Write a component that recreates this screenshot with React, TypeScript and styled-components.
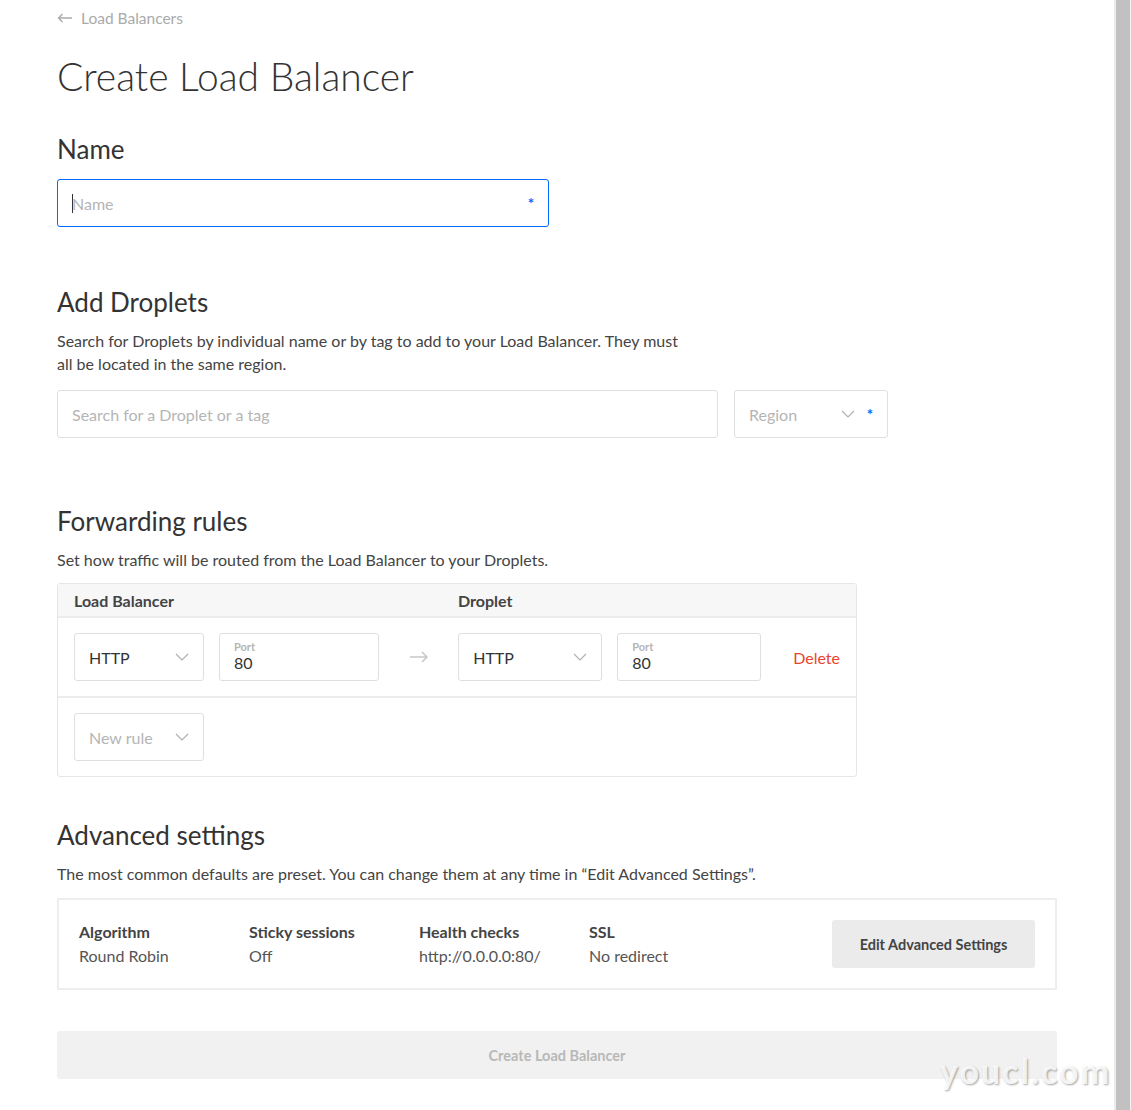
import styled, { createGlobalStyle } from 'styled-components';

const GlobalStyle = createGlobalStyle`
    body {
        margin: 0;
        background: #fff;
        font-family: Lato, "Liberation Sans", sans-serif;
        color: #444;
    }
`;

const Page = styled.div`
    position: relative;
    width: 1000px;
    padding: 8px 0 40px 57px;
`;

const BackLink = styled.a`
    display: flex;
    align-items: center;
    gap: 8px;
    height: 20px;
    font-size: 15.5px;
    color: #aaa;
    text-decoration: none;
`;

const Title = styled.h1`
    margin: 24px 0 0;
    font-size: 39px;
    line-height: 48px;
    font-weight: 300;
    color: #333;
`;

const SectionTitle = styled.h2<{ gap: number }>`
    margin: ${({ gap }) => gap}px 0 0;
    font-size: 26px;
    line-height: 30px;
    font-weight: 400;
    color: #333;
`;

const Description = styled.p<{ width?: number }>`
    margin: 12px 0 0;
    font-size: 16px;
    line-height: 23px;
    color: #444;
    max-width: ${({ width }) => (width ? `${width}px` : 'none')};
`;

const Field = styled.div<{ width: number; focused?: boolean }>`
    box-sizing: border-box;
    position: relative;
    display: flex;
    align-items: center;
    width: ${({ width }) => width}px;
    height: 48px;
    padding: 0 14px;
    border: 1px solid ${({ focused }) => (focused ? '#0069ff' : '#dfdfdf')};
    border-radius: 3px;
    background: #fff;
    font-size: 16px;
    flex-shrink: 0;
`;

const Placeholder = styled.span`
    color: #b5b5b5;
    flex: 1;
`;

const Value = styled.span`
    color: #333;
    flex: 1;
`;

const Caret = styled.span`
    display: inline-block;
    width: 1px;
    height: 19px;
    background: #333;
    margin-right: -1px;
`;

const Required = styled.span`
    color: #0069ff;
    font-size: 15px;
    font-weight: 700;
    margin-left: 12px;
`;

const FieldRow = styled.div`
    display: flex;
    gap: 16px;
    margin-top: 15px;
`;

const NameField = styled(Field)`
    margin-top: 15px;
`;

const Chevron = () => (
    <svg width="14" height="8" viewBox="0 0 14 8" fill="none">
        <path d="M1 1l6 6 6-6" stroke="#b0b0b0" strokeWidth="1.2" />
    </svg>
);

const Table = styled.div`
    box-sizing: border-box;
    width: 800px;
    margin-top: 12px;
    border: 1px solid #e6e6e6;
    border-radius: 3px;
`;

const TableHead = styled.div`
    display: grid;
    grid-template-columns: 384px 1fr;
    height: 32px;
    align-items: center;
    padding: 0 16px;
    background: #f7f7f7;
    border-bottom: 2px solid #ececec;
    font-size: 16px;
    font-weight: 700;
    color: #444;
`;

const RuleRow = styled.div<{ last?: boolean }>`
    display: flex;
    align-items: center;
    padding: 15px 16px;
    gap: 15px;
    border-bottom: ${({ last }) => (last ? 'none' : '2px solid #ececec')};
`;

const ArrowCell = styled.div`
    width: 50px;
    display: flex;
    justify-content: center;
`;

const PortField = styled(Field)`
    flex-direction: column;
    align-items: flex-start;
    justify-content: center;
`;

const PortLabel = styled.span`
    font-size: 11px;
    line-height: 12px;
    font-weight: 700;
    color: #b5b5b5;
`;

const PortValue = styled.span`
    font-size: 16px;
    line-height: 20px;
    color: #333;
`;

const DeleteLink = styled.a`
    margin-left: 17px;
    font-size: 16px;
    color: #e8462c;
`;

const SettingsBox = styled.div`
    box-sizing: border-box;
    display: flex;
    align-items: center;
    width: 1000px;
    margin-top: 13px;
    padding: 20px;
    border: 2px solid #eeeeee;
`;

const SettingItem = styled.div`
    width: 170px;
    font-size: 16px;
    line-height: 24px;
`;

const SettingLabel = styled.div`
    font-weight: 700;
    color: #444;
`;

const SettingValue = styled.div`
    color: #555;
`;

const Button = styled.button<{ wide?: boolean; disabled?: boolean }>`
    box-sizing: border-box;
    height: 48px;
    width: ${({ wide }) => (wide ? '1000px' : '203px')};
    margin-left: ${({ wide }) => (wide ? '0' : 'auto')};
    border: none;
    border-radius: 3px;
    background: ${({ disabled }) => (disabled ? '#f1f1f1' : '#ebebeb')};
    color: ${({ disabled }) => (disabled ? '#b8b8b8' : '#444')};
    font-family: inherit;
    font-size: 14.5px;
    font-weight: 700;
`;

const CreateButton = styled(Button)`
    margin-top: 41px;
    display: block;
`;

const Scrollbar = styled.div`
    position: fixed;
    top: 0;
    bottom: 0;
    left: 1114px;
    width: 14px;
    background: #c1c1c1;
    border-left: 2px solid #ececec;
    border-right: 1px solid #f4f4f4;
`;

const Watermark = styled.div`
    position: absolute;
    left: 940px;
    top: 1050px;
    font-size: 34px;
    font-weight: 700;
    letter-spacing: 2px;
    color: rgba(255, 255, 255, 0.85);
    text-shadow: 1px 1px 2px rgba(0, 0, 0, 0.35);
`;

const SelectField = ({ label, width, muted }: { label: string; width: number; muted?: boolean }) => (
    <Field width={width}>
        {muted ? <Placeholder>{label}</Placeholder> : <Value>{label}</Value>}
        <Chevron />
    </Field>
);

const settings = [
    { label: 'Algorithm', value: 'Round Robin' },
    { label: 'Sticky sessions', value: 'Off' },
    { label: 'Health checks', value: 'http://0.0.0.0:80/' },
    { label: 'SSL', value: 'No redirect' },
];

const App = () => {
    return (
        <>
            <GlobalStyle />
            <Page>
                <BackLink href="#">
                    <svg width="16" height="10" viewBox="0 0 16 10" fill="none">
                        <path d="M15 5H1.5M5.5 1L1.5 5l4 4" stroke="#aaa" strokeWidth="1.4" />
                    </svg>
                    Load Balancers
                </BackLink>
                <Title>Create Load Balancer</Title>

                <SectionTitle gap={34}>Name</SectionTitle>
                <NameField width={492} focused>
                    <Caret />
                    <Placeholder>Name</Placeholder>
                    <Required>*</Required>
                </NameField>

                <SectionTitle gap={60}>Add Droplets</SectionTitle>
                <Description width={630}>
                    Search for Droplets by individual name or by tag to add to your Load Balancer. They must
                    all be located in the same region.
                </Description>
                <FieldRow>
                    <Field width={661}>
                        <Placeholder>Search for a Droplet or a tag</Placeholder>
                    </Field>
                    <Field width={154}>
                        <Placeholder>Region</Placeholder>
                        <Chevron />
                        <Required>*</Required>
                    </Field>
                </FieldRow>

                <SectionTitle gap={68}>Forwarding rules</SectionTitle>
                <Description>Set how traffic will be routed from the Load Balancer to your Droplets.</Description>
                <Table>
                    <TableHead>
                        <span>Load Balancer</span>
                        <span>Droplet</span>
                    </TableHead>
                    <RuleRow>
                        <SelectField label="HTTP" width={130} />
                        <PortField width={160}>
                            <PortLabel>Port</PortLabel>
                            <PortValue>80</PortValue>
                        </PortField>
                        <ArrowCell>
                            <svg width="20" height="12" viewBox="0 0 20 12" fill="none">
                                <path d="M1 6h17M13 1l5 5-5 5" stroke="#c8c8c8" strokeWidth="1.6" />
                            </svg>
                        </ArrowCell>
                        <SelectField label="HTTP" width={144} />
                        <PortField width={144}>
                            <PortLabel>Port</PortLabel>
                            <PortValue>80</PortValue>
                        </PortField>
                        <DeleteLink>Delete</DeleteLink>
                    </RuleRow>
                    <RuleRow last>
                        <SelectField label="New rule" width={130} muted />
                    </RuleRow>
                </Table>

                <SectionTitle gap={43}>Advanced settings</SectionTitle>
                <Description>
                    The most common defaults are preset. You can change them at any time in “Edit Advanced Settings”.
                </Description>
                <SettingsBox>
                    {settings.map((s) => (
                        <SettingItem key={s.label}>
                            <SettingLabel>{s.label}</SettingLabel>
                            <SettingValue>{s.value}</SettingValue>
                        </SettingItem>
                    ))}
                    <Button>Edit Advanced Settings</Button>
                </SettingsBox>

                <CreateButton wide disabled>
                    Create Load Balancer
                </CreateButton>
                <Watermark>youcl.com</Watermark>
            </Page>
            <Scrollbar />
        </>
    );
};

export default App;
